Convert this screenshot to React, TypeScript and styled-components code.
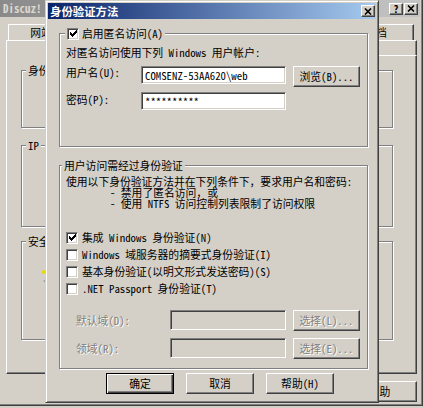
import React from "react";
import styled, { createGlobalStyle, css } from "styled-components";

const FACE = "#d4d0c8";
const FONT = `"Noto Sans Mono CJK SC", "Noto Sans CJK SC", "Noto Sans", sans-serif`;

const GlobalStyle = createGlobalStyle`
  html, body { margin: 0; padding: 0; background: ${FACE}; }
  body { font-family: ${FONT}; font-size: 10.8px; line-height: 13px; color: #000; }
  *, *::before, *::after { box-sizing: border-box; }
`;

const raisedButton = css`
  border: 1px solid;
  border-color: #fff #404040 #404040 #fff;
  box-shadow: inset -1px -1px 0 #808080;
  background: ${FACE};
`;

const sunken = css`
  border: 1px solid;
  border-color: #808080 #fff #fff #808080;
  box-shadow: inset 1px 1px 0 #404040, inset -1px -1px 0 ${FACE};
`;

const etched = css`
  border: 1px solid #808080;
  box-shadow: 1px 1px 0 #fff, inset 1px 1px 0 #fff;
`;

const disabledText = css`
  color: #808080;
  text-shadow: 1px 1px 0 #fff;
`;

const Screen = styled.div`
  position: relative;
  width: 424px;
  height: 408px;
  overflow: hidden;
  background: ${FACE};
`;

/* ---------- background property sheet ---------- */

const BackWindow = styled.div`
  width: 423px;
  height: 406px;
  display: flex;
  flex-direction: column;
  border-right: 1px solid #404040;
  border-bottom: 1px solid #404040;
  box-shadow: inset -1px -1px 0 #808080;
  padding: 0 2px 2px 0;
`;

const BackTitle = styled.div`
  height: 17px;
  flex: none;
  display: flex;
  align-items: center;
  padding: 0 2px 0 3px;
  background: linear-gradient(to right, #8a8a8a, #c4c4c4);
`;

const BackTitleText = styled.span`
  flex: 1;
  font-weight: bold;
  font-size: 11px;
  color: #dcd8d0;
  white-space: nowrap;
`;

const CaptionButton = styled.div<{ $gap?: number }>`
  ${raisedButton}
  width: 14px;
  height: 12px;
  flex: none;
  margin-left: ${(p) => p.$gap ?? 0}px;
  display: flex;
  align-items: center;
  justify-content: center;
  font-weight: bold;
  font-size: 10px;
  line-height: 1;
`;

const TabRow = styled.div<{ $left: number; $right: number; $top?: number }>`
  display: flex;
  flex: none;
  margin-top: ${(p) => p.$top ?? 0}px;
  padding-left: ${(p) => p.$left}px;
  padding-right: ${(p) => p.$right}px;
`;

const Tab = styled.div<{ $w: number; $h: number; $selected?: boolean }>`
  width: ${(p) => p.$w}px;
  flex: none;
  border-top: 1px solid #fff;
  border-left: 1px solid #fff;
  border-right: 1px solid #404040;
  box-shadow: inset -1px 0 0 #808080;
  background: ${FACE};
  text-align: center;
  line-height: 14px;
  white-space: nowrap;
  overflow: hidden;
  position: relative;
  z-index: ${(p) => (p.$selected ? 1 : 0)};
  margin-bottom: ${(p) => (p.$selected ? -1 : 0)}px;
  height: ${(p) => p.$h + (p.$selected ? 1 : 0)}px;
`;

const TabPanel = styled.div`
  flex: none;
  height: 319px;
  margin: 0 3px 0 6px;
  border: 1px solid;
  border-color: #fff #404040 #404040 #fff;
  box-shadow: inset -1px -1px 0 #808080;
  padding: 0 23px 0 14px;
  display: flex;
  flex-direction: column;
`;

const BackGroup = styled.div<{ $top: number; $h: number }>`
  ${etched}
  position: relative;
  flex: none;
  margin-top: ${(p) => p.$top}px;
  height: ${(p) => p.$h}px;
  padding-left: 19px;
`;

const Legend = styled.div<{ $left: number }>`
  position: absolute;
  top: -7px;
  left: ${(p) => p.$left}px;
  padding: 0 2px;
  height: 13px;
  background: ${FACE};
  display: flex;
  align-items: center;
  gap: 3px;
  white-space: nowrap;
`;

const GroupIcon = styled.svg<{ $top: number }>`
  display: block;
  margin-top: ${(p) => p.$top}px;
`;

const BackButtons = styled.div`
  display: flex;
  flex: none;
  justify-content: flex-end;
  gap: 6px;
  margin-top: 7px;
  padding-right: 3px;
`;

const PushButton = styled.div<{ $w: number; $default?: boolean; $disabled?: boolean }>`
  ${raisedButton}
  width: ${(p) => p.$w}px;
  height: 21px;
  flex: none;
  display: flex;
  align-items: center;
  justify-content: center;
  white-space: nowrap;
  ${(p) =>
    p.$default &&
    css`
      border: 1px solid #000;
      box-shadow: inset 1px 1px 0 #fff, inset -1px -1px 0 #404040, inset -2px -2px 0 #808080;
    `}
  ${(p) => p.$disabled && disabledText}
`;

/* ---------- authentication dialog ---------- */

const Dialog = styled.div`
  position: absolute;
  z-index: 10;
  left: 45px;
  top: 0;
  width: 334px;
  height: 403px;
  background: ${FACE};
  border: 1px solid;
  border-color: ${FACE} #404040 #404040 ${FACE};
  box-shadow: inset 1px 1px 0 #fff, inset -1px -1px 0 #808080;
  padding: 2px;
  display: flex;
  flex-direction: column;
`;

const DialogTitle = styled.div`
  height: 16px;
  flex: none;
  display: flex;
  align-items: center;
  padding: 0 1px 0 2px;
  background: linear-gradient(to right, #0a246a, #a6caf0);
`;

const DialogTitleText = styled.span`
  flex: 1;
  color: #fff;
  font-weight: bold;
  font-size: 11.4px;
  white-space: nowrap;
`;

const DialogBody = styled.div`
  flex: 1;
  display: flex;
  flex-direction: column;
  padding: 0 8px 0 11px;
`;

const Group = styled.div<{ $top: number; $h: number; $pt: number }>`
  ${etched}
  position: relative;
  flex: none;
  margin-top: ${(p) => p.$top}px;
  height: ${(p) => p.$h}px;
  padding: ${(p) => p.$pt}px 7px 0 6px;
  display: flex;
  flex-direction: column;
`;

const TextLine = styled.div<{ $indent?: number; $lh?: number }>`
  white-space: pre;
  line-height: ${(p) => p.$lh ?? 13}px;
  padding-left: ${(p) => p.$indent ?? 0}px;
`;

const FormRow = styled.div<{ $top: number; $indent?: number }>`
  display: flex;
  align-items: flex-start;
  flex: none;
  margin-top: ${(p) => p.$top}px;
  padding-left: ${(p) => p.$indent ?? 0}px;
`;

const FieldLabel = styled.div<{ $w: number; $pt?: number; $disabled?: boolean }>`
  width: ${(p) => p.$w}px;
  flex: none;
  padding-top: ${(p) => p.$pt ?? 0}px;
  white-space: nowrap;
  ${(p) => p.$disabled && disabledText}
`;

const Field = styled.div<{ $w: number; $h: number; $disabled?: boolean }>`
  ${sunken}
  width: ${(p) => p.$w}px;
  height: ${(p) => p.$h}px;
  flex: none;
  margin-right: 7px;
  background: ${(p) => (p.$disabled ? FACE : "#fff")};
  padding: 0 3px;
  display: flex;
  align-items: center;
  white-space: nowrap;
  overflow: hidden;
`;

const CheckRows = styled.div`
  display: flex;
  flex-direction: column;
  margin-top: 20px;
`;

const CheckRow = styled.div`
  height: 17px;
  display: flex;
  align-items: center;
  gap: 4px;
  white-space: nowrap;
`;

const CheckBox = styled.span`
  ${sunken}
  width: 12px;
  height: 12px;
  flex: none;
  background: #fff;
  display: inline-flex;
  align-items: center;
  justify-content: center;
`;

const DialogButtons = styled.div`
  display: flex;
  flex: none;
  justify-content: flex-end;
  gap: 12px;
  margin-top: 4px;
  padding-right: 34px;
`;

const CheckMark = () => (
  <svg width="7" height="7" viewBox="0 0 7 7" shapeRendering="crispEdges">
    <g fill="#000">
      <rect x="6" y="0" width="1" height="1" />
      <rect x="5" y="1" width="2" height="1" />
      <rect x="0" y="2" width="1" height="1" />
      <rect x="4" y="2" width="3" height="1" />
      <rect x="0" y="3" width="2" height="1" />
      <rect x="3" y="3" width="3" height="1" />
      <rect x="0" y="4" width="5" height="1" />
      <rect x="1" y="5" width="3" height="1" />
      <rect x="2" y="6" width="1" height="1" />
    </g>
  </svg>
);

const Check: React.FC<{ checked?: boolean }> = ({ checked }) => (
  <CheckBox>{checked && <CheckMark />}</CheckBox>
);

const CloseGlyph = () => (
  <svg width="8" height="7" viewBox="0 0 8 7">
    <path d="M1 0.5 L7 6.5 M7 0.5 L1 6.5" stroke="#000" strokeWidth="1.6" />
  </svg>
);

export default function App() {
  return (
    <>
      <GlobalStyle />
      <Screen>
        <BackWindow>
          <BackTitle>
            <BackTitleText>Discuz!</BackTitleText>
            <CaptionButton>?</CaptionButton>
            <CaptionButton $gap={1}>
              <CloseGlyph />
            </CaptionButton>
          </BackTitle>

          {/* tabs mostly covered by the dialog; only the outer ones show */}
          <TabRow $left={8} $right={6} $top={7}>
            <Tab $w={66} $h={16}>网站</Tab>
            <Tab $w={132} $h={16} />
            <Tab $w={132} $h={16} />
            <Tab $w={76} $h={16}>文档</Tab>
          </TabRow>
          <TabRow $left={6} $right={3}>
            <Tab $w={140} $h={15} $selected />
            <Tab $w={78} $h={15} />
            <Tab $w={77} $h={15} />
            <Tab $w={116} $h={15} />
          </TabRow>

          <TabPanel>
            <BackGroup $top={14} $h={58}>
              <Legend $left={4}>身份</Legend>
              <GroupIcon $top={17} width="16" height="17" viewBox="0 0 16 17">
                <ellipse cx="8" cy="8.5" rx="4" ry="7.5" fill="#1f8a86" />
                <ellipse cx="7" cy="6" rx="1.5" ry="3" fill="#6cc6c0" />
              </GroupIcon>
            </BackGroup>
            <BackGroup $top={17} $h={82}>
              <Legend $left={4}>IP</Legend>
            </BackGroup>
            <BackGroup $top={14} $h={99}>
              <Legend $left={4}>安全</Legend>
              <GroupIcon $top={27} width="16" height="16" viewBox="0 0 16 16">
                <circle cx="3" cy="3" r="2" fill="#e8d800" />
                <path d="M2 12 L5 10 L5 14 Z" fill="#a0a0a0" />
              </GroupIcon>
            </BackGroup>
          </TabPanel>

          <BackButtons>
            <PushButton $w={75} />
            <PushButton $w={75} />
            <PushButton $w={75} />
            <PushButton $w={75}>帮助</PushButton>
          </BackButtons>
        </BackWindow>

        <Dialog>
          <DialogTitle>
            <DialogTitleText>身份验证方法</DialogTitleText>
            <CaptionButton>
              <CloseGlyph />
            </CaptionButton>
          </DialogTitle>

          <DialogBody>
            <Group $top={14} $h={114} $pt={12}>
              <Legend $left={5}>
                <Check checked />
                <span>启用匿名访问(A)</span>
              </Legend>
              <TextLine>对匿名访问使用下列 Windows 用户帐户:</TextLine>
              <FormRow $top={7}>
                <FieldLabel $w={75}>用户名(U):</FieldLabel>
                <Field $w={145} $h={18}>COMSENZ-53AA620\web</Field>
                <PushButton $w={67}>浏览(B)...</PushButton>
              </FormRow>
              <FormRow $top={5}>
                <FieldLabel $w={75} $pt={1}>密码(P):</FieldLabel>
                <Field $w={145} $h={18}>**********</Field>
              </FormRow>
            </Group>

            <Group $top={18} $h={204} $pt={10}>
              <Legend $left={2}>用户访问需经过身份验证</Legend>
              <TextLine $lh={11}>使用以下身份验证方法并在下列条件下，要求用户名和密码:</TextLine>
              <TextLine $lh={11} $indent={44}>- 禁用了匿名访问，或</TextLine>
              <TextLine $lh={11} $indent={44}>- 使用 NTFS 访问控制列表限制了访问权限</TextLine>

              <CheckRows>
                <CheckRow>
                  <Check checked />
                  <span>集成 Windows 身份验证(N)</span>
                </CheckRow>
                <CheckRow>
                  <Check />
                  <span>Windows 域服务器的摘要式身份验证(I)</span>
                </CheckRow>
                <CheckRow>
                  <Check />
                  <span>基本身份验证(以明文形式发送密码)(S)</span>
                </CheckRow>
                <CheckRow>
                  <Check />
                  <span>.NET Passport 身份验证(T)</span>
                </CheckRow>
              </CheckRows>

              <FormRow $top={13} $indent={10}>
                <FieldLabel $w={94} $pt={4} $disabled>默认域(D):</FieldLabel>
                <Field $w={116} $h={20} $disabled />
                <PushButton $w={67} $disabled>选择(L)...</PushButton>
              </FormRow>
              <FormRow $top={7} $indent={10}>
                <FieldLabel $w={94} $pt={4} $disabled>领域(R):</FieldLabel>
                <Field $w={116} $h={20} $disabled />
                <PushButton $w={67} $disabled>选择(E)...</PushButton>
              </FormRow>
            </Group>

            <DialogButtons>
              <PushButton $w={68} $default>确定</PushButton>
              <PushButton $w={68}>取消</PushButton>
              <PushButton $w={68}>帮助(H)</PushButton>
            </DialogButtons>
          </DialogBody>
        </Dialog>
      </Screen>
    </>
  );
}
